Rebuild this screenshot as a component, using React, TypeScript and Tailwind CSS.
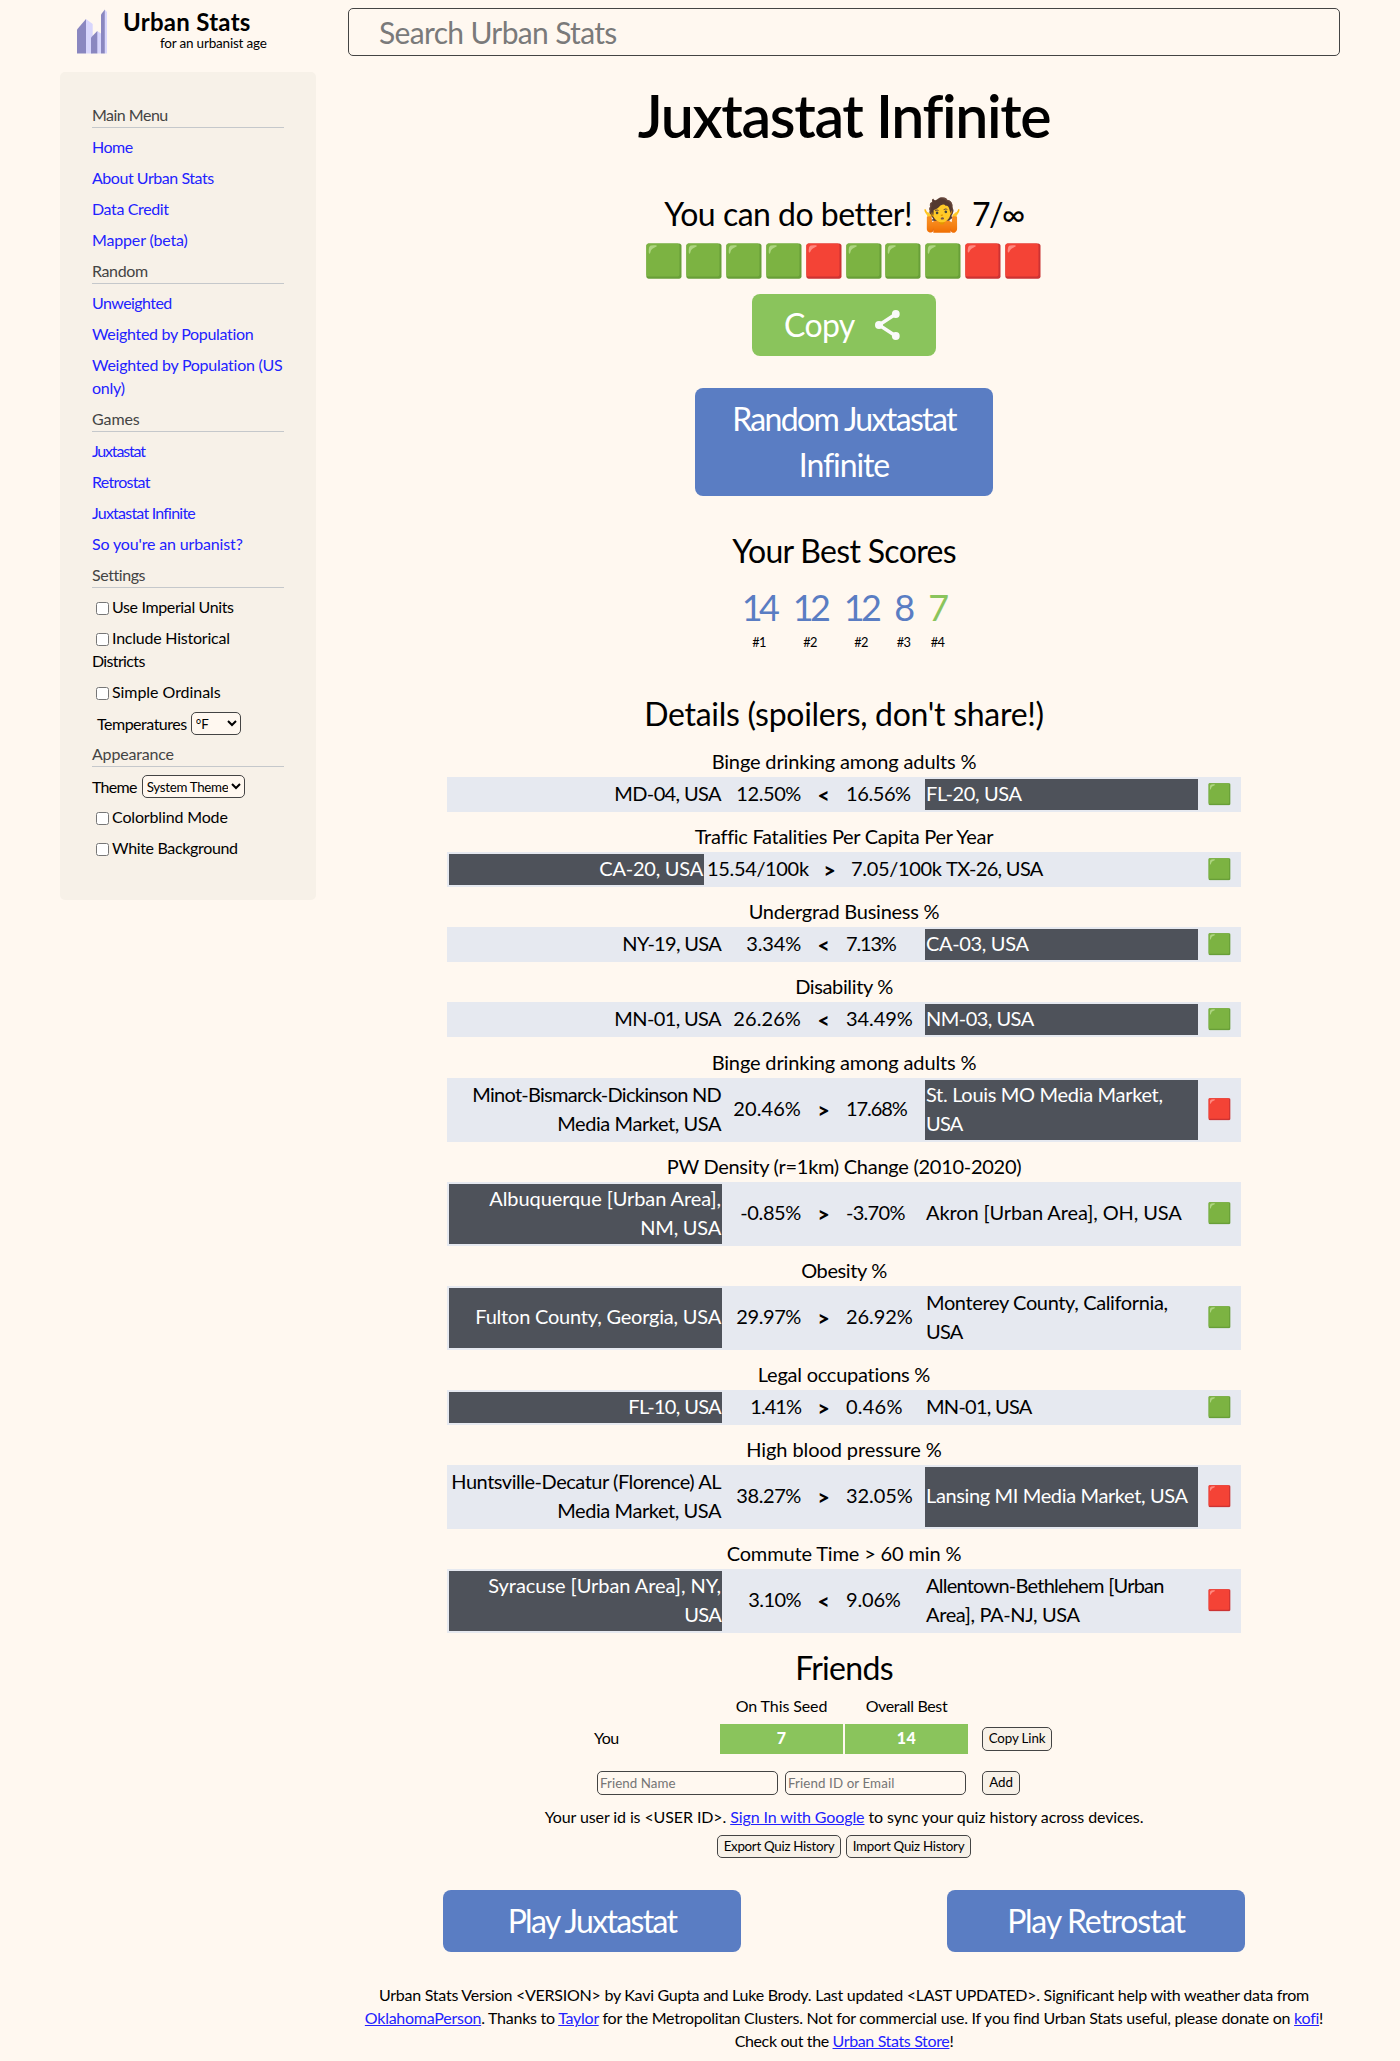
import { useLayoutEffect, useRef, type ReactNode } from 'react'

/** Text whose letter spacing is tuned so that it spans `w` pixels. */
function T({
  w,
  className = '',
  lift = 'align-[0.04em]',
  children,
}: {
  w: number
  className?: string
  lift?: string
  children: ReactNode
}) {
  const ref = useRef<HTMLSpanElement>(null)
  useLayoutEffect(() => {
    const el = ref.current
    if (!el) return
    el.style.letterSpacing = '0px'
    const natural = el.getBoundingClientRect().width
    const count = (el.textContent ?? '').length
    el.style.letterSpacing = `${(w + 0.7 - natural) / count}px`
  }, [w])
  return (
    <span ref={ref} className={`inline-block leading-none whitespace-nowrap ${lift} ${className}`}>
      {children}
    </span>
  )
}

/** Large text sits on the plain baseline. */
function Big({ w, children }: { w: number; children: ReactNode }) {
  return (
    <T w={w} lift="align-baseline">
      {children}
    </T>
  )
}

const linkColor = 'text-[#2222ff]'

function MenuHeader({ w, children }: { w: number; children: string }) {
  return (
    <div className="mb-2 border-b border-[#c5c8cb] text-[#444444]">
      <T w={w}>{children}</T>
    </div>
  )
}

function MenuLink({ lines }: { lines: [string, number][] }) {
  return (
    <a className={`mb-2 block ${linkColor}`}>
      {lines.map(([text, w]) => (
        <div key={text}>
          <T w={w}>{text}</T>
        </div>
      ))}
    </a>
  )
}

function Check({ lines }: { lines: [string, number][] }) {
  return (
    <label className="mb-2 block">
      {lines.map(([text, w], i) => (
        <div key={text} className="h-[23px]">
          {i === 0 && <input type="checkbox" className="mr-[3px] ml-1 size-[13px] align-[-1px]" />}
          <T w={w}>{text}</T>
        </div>
      ))}
    </label>
  )
}

function Sidebar() {
  return (
    <nav className="h-[828px] w-64 shrink-0 rounded-[5px] bg-[#f7f1e8] p-8">
      <MenuHeader w={75}>Main Menu</MenuHeader>
      <MenuLink lines={[['Home', 40]]} />
      <MenuLink lines={[['About Urban Stats', 121]]} />
      <MenuLink lines={[['Data Credit', 76]]} />
      <MenuLink lines={[['Mapper (beta)', 95]]} />
      <MenuHeader w={55}>Random</MenuHeader>
      <MenuLink lines={[['Unweighted', 79]]} />
      <MenuLink lines={[['Weighted by Population', 161]]} />
      <MenuLink lines={[['Weighted by Population (US', 190], ['only)', 32]]} />
      <MenuHeader w={47}>Games</MenuHeader>
      <MenuLink lines={[['Juxtastat', 52]]} />
      <MenuLink lines={[['Retrostat', 57]]} />
      <MenuLink lines={[['Juxtastat Infinite', 102]]} />
      <MenuLink lines={[["So you're an urbanist?", 150]]} />
      <MenuHeader w={52}>Settings</MenuHeader>
      <Check lines={[['Use Imperial Units', 121]]} />
      <Check lines={[['Include Historical', 117], ['Districts', 52]]} />
      <Check lines={[['Simple Ordinals', 108]]} />
      <div className="mb-2 flex h-[23px] items-center pl-[5px]">
        <T w={89}>Temperatures</T>
        <select className="ml-1 h-[23px] w-[50px] rounded-[5px] border border-[#444444] bg-[#fff8f0] text-[13.33px] leading-none">
          <option>°F</option>
        </select>
      </div>
      <MenuHeader w={81}>Appearance</MenuHeader>
      <div className="mb-2 flex h-[23px] items-center">
        <T w={44}>Theme</T>
        <select className="ml-[5px] h-[23px] w-[103px] rounded-[5px] border border-[#444444] bg-[#fff8f0] text-[13.33px] leading-none tracking-[-0.3px]">
          <option>System Theme</option>
        </select>
      </div>
      <Check lines={[['Colorblind Mode', 115]]} />
      <Check lines={[['White Background', 125]]} />
    </nav>
  )
}

function Logo() {
  return (
    <svg width="30" height="45" viewBox="0 0 30 45">
      <path d="M9 10 L15.7 15 V44.5 H9 Z" fill="#d8d6fc" />
      <path d="M0 20.5 L9 10 V44.5 H0 Z" fill="#8a87c0" />
      <path d="M20 22 L24 24.5 V44.5 H20 Z" fill="#d8d6fc" />
      <path d="M14 28.5 L20.3 22 V44.5 H14 Z" fill="#8a87c0" />
      <path d="M27.5 0.5 L30 3 V44.5 H27.5 Z" fill="#d8d6fc" />
      <path d="M24 5.5 L27.8 0.5 V44.5 H24 Z" fill="#8a87c0" />
    </svg>
  )
}

type Line = [string, number]
type Row = {
  title: Line
  left: Line[]
  a: Line
  op: string
  b: Line
  right: Line[]
  pick: 'left' | 'right'
  ok: boolean
  wide?: boolean
}

const rows: Row[] = [
  { title: ['Binge drinking among adults %', 264], left: [['MD-04, USA', 106]], a: ['12.50%', 64], op: '<', b: ['16.56%', 64], right: [['FL-20, USA', 95]], pick: 'right', ok: true },
  { title: ['Traffic Fatalities Per Capita Per Year', 297], left: [['CA-20, USA', 103]], a: ['15.54/100k', 101], op: '>', b: ['7.05/100k', 90], right: [['TX-26, USA', 96]], pick: 'left', ok: true, wide: true },
  { title: ['Undergrad Business %', 190], left: [['NY-19, USA', 98]], a: ['3.34%', 54], op: '<', b: ['7.13%', 49], right: [['CA-03, USA', 102]], pick: 'right', ok: true },
  { title: ['Disability %', 97], left: [['MN-01, USA', 106]], a: ['26.26%', 67], op: '<', b: ['34.49%', 66], right: [['NM-03, USA', 107]], pick: 'right', ok: true },
  { title: ['Binge drinking among adults %', 264], left: [['Minot-Bismarck-Dickinson ND', 248], ['Media Market, USA', 163]], a: ['20.46%', 67], op: '>', b: ['17.68%', 60], right: [['St. Louis MO Media Market,', 236], ['USA', 36]], pick: 'right', ok: false },
  { title: ['PW Density (r=1km) Change (2010-2020)', 354], left: [['Albuquerque [Urban Area],', 231], ['NM, USA', 80]], a: ['-0.85%', 60], op: '>', b: ['-3.70%', 58], right: [['Akron [Urban Area], OH, USA', 255]], pick: 'left', ok: true },
  { title: ['Obesity %', 85], left: [['Fulton County, Georgia, USA', 245]], a: ['29.97%', 64], op: '>', b: ['26.92%', 66], right: [['Monterey County, California,', 241], ['USA', 36]], pick: 'left', ok: true },
  { title: ['Legal occupations %', 172], left: [['FL-10, USA', 92]], a: ['1.41%', 50], op: '>', b: ['0.46%', 56], right: [['MN-01, USA', 105]], pick: 'left', ok: true },
  { title: ['High blood pressure %', 195], left: [['Huntsville-Decatur (Florence) AL', 269], ['Media Market, USA', 163]], a: ['38.27%', 64], op: '>', b: ['32.05%', 66], right: [['Lansing MI Media Market, USA', 261]], pick: 'right', ok: false },
  { title: ['Commute Time > 60 min %', 234], left: [['Syracuse [Urban Area], NY,', 232], ['USA', 36]], a: ['3.10%', 52], op: '<', b: ['9.06%', 54], right: [['Allentown-Bethlehem [Urban', 237], ['Area], PA-NJ, USA', 153]], pick: 'left', ok: false },
]

function Place({
  lines,
  picked,
  align,
  tall,
}: {
  lines: Line[]
  picked: boolean
  align: 'left' | 'right'
  tall: boolean
}) {
  return (
    <div
      className={`flex flex-col justify-center px-px pt-px ${tall && lines.length === 1 ? 'pb-0.5' : 'pb-px'} ${picked ? 'bg-[#4e525a] text-white' : ''} ${align === 'right' ? 'text-right' : ''}`}
    >
      {lines.map(([text, w]) => (
        <div key={text} className="h-[29px]">
          <T w={w}>{text}</T>
        </div>
      ))}
    </div>
  )
}

function DetailRow({ row, extra }: { row: Row; extra: boolean }) {
  const tall = row.left.length > 1 || row.right.length > 1
  const pad = tall ? 'px-px pt-px pb-0.5' : 'p-px'
  return (
    <div className={extra ? 'mt-3' : 'mt-[11px]'}>
      <div className="h-[29px] text-center">
        <T w={row.title[1]}>{row.title[0]}</T>
      </div>
      <div
        className={`grid gap-0.5 bg-[#e6e9f0] p-0.5 ${row.wide ? 'grid-cols-[255px_103px_37px_93px_253px_39px]' : 'grid-cols-[273px_78px_39px_78px_273px_39px]'}`}
      >
        <Place lines={row.left} picked={row.pick === 'left'} align="right" tall={tall} />
        <div className={`self-center text-right ${pad}`}>
          <T w={row.a[1]}>{row.a[0]}</T>
        </div>
        <div className={`self-center text-center text-[21px] font-black ${pad}`}>{row.op}</div>
        <div className={`self-center ${pad}`}>
          <T w={row.b[1]}>{row.b[0]}</T>
        </div>
        <Place lines={row.right} picked={row.pick === 'right'} align="left" tall={tall} />
        <div className={`self-center text-center ${tall ? 'h-8' : 'h-[31px]'}`}>{row.ok ? '🟩' : '🟥'}</div>
      </div>
    </div>
  )
}

const scores = [
  { value: '14', rank: '#1', w: 34, cell: 'w-[51px]', color: 'text-[#5a7dc3]' },
  { value: '12', rank: '#2', w: 34, cell: 'w-[51px]', color: 'text-[#5a7dc3]' },
  { value: '12', rank: '#2', w: 34, cell: 'w-[51px]', color: 'text-[#5a7dc3]' },
  { value: '8', rank: '#3', w: 18, cell: 'w-[34px]', color: 'text-[#5a7dc3]' },
  { value: '7', rank: '#4', w: 18, cell: 'w-[34px]', color: 'text-[#8ac45c]' },
]

const smallButton =
  'flex items-center justify-center rounded-[5px] border border-[#444444] bg-[#f7f1e8] text-[13.33px] leading-none'
const textInput =
  'h-6 w-[181px] rounded-[5px] border border-[#444444] bg-[#fff8f0] px-0.5 text-[13.33px] placeholder:text-[#757575]'
const blueButton = 'block w-[298px] rounded-lg bg-[#5a7dc3] py-2 text-center text-[32px] leading-[46px] text-white'

export default function App() {
  return (
    <div className="min-h-[2061px] bg-[#fff8f0] font-['Lato','Noto_Color_Emoji',sans-serif] text-base leading-[23px] text-black">
      <div className="mx-auto w-[1280px]">
        <header className="flex h-[72px] gap-8">
          <div className="flex w-64 pt-[9px] pl-[17px]">
            <Logo />
            <div className="pl-4">
              <div className="h-[26px] text-[24px] leading-[28px]">
                <T w={127} className="font-bold">Urban Stats</T>
              </div>
              <div className="pl-[37px] text-[13.5px] leading-[19px]">
                <T w={106}>for an urbanist age</T>
              </div>
            </div>
          </div>
          <div className="mt-2 flex h-12 w-[992px] items-center rounded-[5px] border border-[#444444] pl-[30px] text-[30px] leading-[43px] text-[#7a7a7a]">
            <T w={237}>Search Urban Stats</T>
          </div>
        </header>

        <div className="flex gap-8">
          <Sidebar />
          <main className="w-[992px]">
            <h1 className="h-[87px] text-center text-[59px] leading-[88px] font-semibold">
              <Big w={411}>Juxtastat Infinite</Big>
            </h1>
            <div className="mt-8 h-[46px] text-center text-[32px] leading-[46px]">
              <Big w={246}>You can do better!</Big>
              <span className="mx-[10px] inline-block w-[40px] leading-none">🤷</span>
              <Big w={51}>7/∞</Big>
            </div>
            <div className="h-[46px] text-center text-[32px] leading-[45px]">🟩🟩🟩🟩🟥🟩🟩🟩🟥🟥</div>
            <button className="mx-auto mt-[11px] flex h-[62px] w-[184px] items-center justify-between rounded-lg bg-[#8ac45c] pr-9 pl-8 text-[32px] leading-[46px] text-white">
              <div>
                <Big w={70}>Copy</Big>
              </div>
              <svg width="25" height="30" viewBox="0 0 25 30" className="text-[#fafafa]">
                <path d="M20.8 4 L4 15 L20.8 26" fill="none" stroke="currentColor" strokeWidth="3.4" />
                <circle cx="20.8" cy="4" r="3.9" fill="currentColor" />
                <circle cx="4" cy="15" r="4" fill="currentColor" />
                <circle cx="20.8" cy="26" r="3.9" fill="currentColor" />
              </svg>
            </button>
            <button className={`mx-auto mt-8 ${blueButton}`}>
              <Big w={223}>Random Juxtastat</Big>
              <br />
              <Big w={89}>Infinite</Big>
            </button>

            <h2 className="mt-8 h-[46px] text-center text-[32px] leading-[46px]">
              <Big w={223}>Your Best Scores</Big>
            </h2>
            <div className="mt-2 flex justify-center">
              {scores.map((s, i) => (
                <div key={i} className={`text-center ${s.cell}`}>
                  <div className={`h-[51px] text-[36px] leading-[52px] ${s.color}`}>
                    <T w={s.w}>{s.value}</T>
                  </div>
                  <div className="h-[18px] text-[12.8px] leading-[18px]">
                    <T w={13}>{s.rank}</T>
                  </div>
                </div>
              ))}
            </div>

            <h2 className="mt-10 h-[46px] text-center text-[32px] leading-[46px]">
              <Big w={399}>Details (spoilers, don't share!)</Big>
            </h2>
            <section className="mx-auto w-[794px] text-[20px] leading-[29px]">
              {rows.map((row, i) => (
                <DetailRow key={i} row={row} extra={i === 4} />
              ))}
            </section>

            <h2 className="mt-3 h-[46px] text-center text-[32px] leading-[46px]">
              <Big w={97}>Friends</Big>
            </h2>
            <div className="mx-auto w-[500px]">
              <div className="mt-1 flex gap-0.5 pl-[126px] text-center">
                <div className="w-[123px]">
                  <T w={91}>On This Seed</T>
                </div>
                <div className="w-[123px]">
                  <T w={81}>Overall Best</T>
                </div>
              </div>
              <div className="mt-1.5 flex h-[30px] items-center">
                <div className="w-[126px] pb-px">
                  <T w={24}>You</T>
                </div>
                <div className="mr-0.5 w-[123px] bg-[#8ac45c] pt-[3px] pb-1 text-center font-black text-white">
                  <T w={9}>7</T>
                </div>
                <div className="w-[123px] bg-[#8ac45c] pt-[3px] pb-1 text-center font-black text-white">
                  <T w={19}>14</T>
                </div>
                <button className={`ml-3.5 h-6 w-[70px] ${smallButton}`}>
                  <T w={56}>Copy Link</T>
                </button>
              </div>
              <div className="mt-[17px] flex h-6 pl-[3px]">
                <input className={`tracking-[0.05px] ${textInput}`} placeholder="Friend Name" />
                <input className={`ml-[7px] tracking-[0.1px] ${textInput}`} placeholder="Friend ID or Email" />
                <button className={`ml-4 h-6 w-[38px] ${smallButton}`}>
                  <T w={23}>Add</T>
                </button>
              </div>
            </div>
            <div className="mt-[11px] h-[23px] text-center">
              <T w={598}>
                Your user id is &lt;USER ID&gt;. <a className={`underline ${linkColor}`}>Sign In with Google</a> to sync
                your quiz history across devices.
              </T>
            </div>
            <div className="mt-1.5 flex h-[23px] justify-center gap-[5px]">
              <button className={`w-[124px] ${smallButton}`}>
                <T w={110}>Export Quiz History</T>
              </button>
              <button className={`w-[125px] ${smallButton}`}>
                <T w={111}>Import Quiz History</T>
              </button>
            </div>

            <div className="mx-auto mt-8 flex w-[802px] justify-between">
              <button className={blueButton}>
                <Big w={168}>Play Juxtastat</Big>
              </button>
              <button className={blueButton}>
                <Big w={177}>Play Retrostat</Big>
              </button>
            </div>

            <footer className="mt-8 pb-2 text-center">
              <div className="h-[23px]">
                <T w={929}>
                  Urban Stats Version &lt;VERSION&gt; by Kavi Gupta and Luke Brody. Last updated &lt;LAST UPDATED&gt;.
                  Significant help with weather data from
                </T>
              </div>
              <div className="h-[23px]">
                <T w={957}>
                  <a className={`underline ${linkColor}`}>OklahomaPerson</a>. Thanks to{' '}
                  <a className={`underline ${linkColor}`}>Taylor</a> for the Metropolitan Clusters. Not for commercial
                  use. If you find Urban Stats useful, please donate on{' '}
                  <a className={`underline ${linkColor}`}>kofi</a>!
                </T>
              </div>
              <div className="h-[23px]">
                <T w={218}>
                  Check out the <a className={`underline ${linkColor}`}>Urban Stats Store</a>!
                </T>
              </div>
            </footer>
          </main>
        </div>
      </div>
    </div>
  )
}
